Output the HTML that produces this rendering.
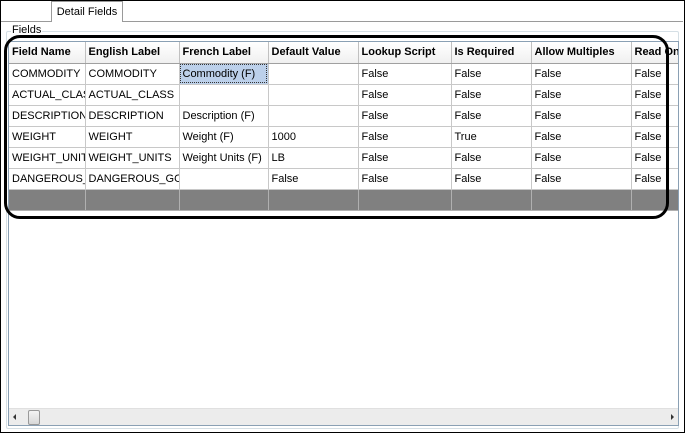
<!DOCTYPE html>
<html><head><meta charset="utf-8"><style>
*{margin:0;padding:0;box-sizing:border-box}
body{width:685px;height:433px;background:#fff;position:relative;overflow:hidden;font-family:"Liberation Sans",sans-serif;font-size:11px;color:#000}
.outer{position:absolute;left:0;top:0;width:685px;height:433px;border:1px solid #000}
.tab{position:absolute;left:51px;top:1px;width:72px;height:21px;border:1px solid #9a9a9a;border-bottom:none;background:#fff;text-align:center;line-height:20px;font-size:11px}
.panel{position:absolute;left:1px;top:21px;width:682px;height:410px;border-top:1px solid #9a9a9a}
.grp{position:absolute;left:6px;top:31px;width:673px;height:398px;border:1px solid #d5dfe5;border-radius:2px}
.grplbl{position:absolute;left:11px;top:24px;background:#fff;padding:0 1px;font-size:11px;line-height:13px}
.grid{position:absolute;left:8px;top:41px;width:671px;height:385px;border:1px solid #8aa0b4;background:#fff;overflow:hidden}
table{border-collapse:collapse;table-layout:fixed;position:absolute;left:0;top:0;width:682px}
td,th{height:21px;border-right:1px solid #c8c8c8;border-bottom:1px solid #c8c8c8;padding:0 3px;white-space:nowrap;overflow:hidden;text-align:left;font-weight:normal}
th{font-weight:bold;background:linear-gradient(#fff,#f0f0f0);border-bottom:1px solid #a0a0a0;border-right:1px solid #c0c0c0}
tr.gray td{background:#808080;border-color:#b0b0b0}
.sel{background:#bcd0ea;outline:1px dotted #333;outline-offset:-2px}
.hs{position:absolute;left:0;bottom:0;width:669px;height:17px;background:#ececec;border-top:1px solid #e0e0e0}
.thumb{position:absolute;left:19px;top:1px;width:12px;height:15px;border:1px solid #999;border-radius:2px;background:linear-gradient(#f4f4f4,#d8d8d8)}
.la{position:absolute;left:4px;top:5px;width:0;height:0;border-top:3px solid transparent;border-bottom:3px solid transparent;border-right:3px solid #333}
.ra{position:absolute;right:4px;top:5px;width:0;height:0;border-top:3px solid transparent;border-bottom:3px solid transparent;border-left:3px solid #333}
.ann{position:absolute;left:4px;top:35px;width:665px;height:184px;border:3px solid #000;border-radius:16px}
</style></head><body>
<div class="outer"></div>
<div class="panel"></div>
<div class="tab">Detail Fields</div>
<div class="grp"></div>
<div class="grplbl">Fields</div>
<div class="grid">
<table>
<colgroup><col style="width:76px"><col style="width:94px"><col style="width:89px"><col style="width:90px"><col style="width:93px"><col style="width:80px"><col style="width:100px"><col style="width:60px"></colgroup>
<tr><th>Field Name</th><th>English Label</th><th>French Label</th><th>Default Value</th><th>Lookup Script</th><th>Is Required</th><th>Allow Multiples</th><th>Read Only</th></tr>
<tr><td>COMMODITY</td><td>COMMODITY</td><td class="sel">Commodity (F)</td><td></td><td>False</td><td>False</td><td>False</td><td>False</td></tr>
<tr><td>ACTUAL_CLASS</td><td>ACTUAL_CLASS</td><td></td><td></td><td>False</td><td>False</td><td>False</td><td>False</td></tr>
<tr><td>DESCRIPTION</td><td>DESCRIPTION</td><td>Description (F)</td><td></td><td>False</td><td>False</td><td>False</td><td>False</td></tr>
<tr><td>WEIGHT</td><td>WEIGHT</td><td>Weight (F)</td><td>1000</td><td>False</td><td>True</td><td>False</td><td>False</td></tr>
<tr><td>WEIGHT_UNITS</td><td>WEIGHT_UNITS</td><td>Weight Units (F)</td><td>LB</td><td>False</td><td>False</td><td>False</td><td>False</td></tr>
<tr><td>DANGEROUS_GOODS</td><td>DANGEROUS_GOODS</td><td></td><td>False</td><td>False</td><td>False</td><td>False</td><td>False</td></tr>
<tr class="gray"><td></td><td></td><td></td><td></td><td></td><td></td><td></td><td></td></tr>
</table>
<div class="hs"><div class="la"></div><div class="thumb"></div><div class="ra"></div></div>
</div>
<div class="ann"></div>
</body></html>
